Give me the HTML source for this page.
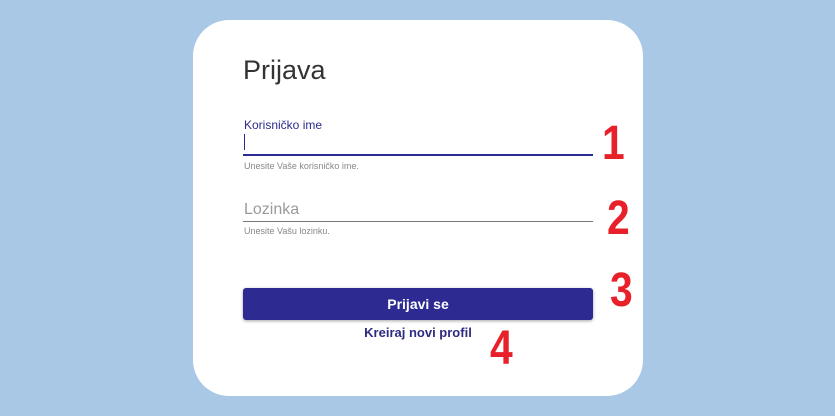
<!DOCTYPE html>
<html><head><style>
body{margin:0;width:835px;height:416px;background:#a8c8e6;position:relative;overflow:hidden;font-family:"Liberation Sans",sans-serif}
.card{position:absolute;left:193px;top:20px;width:450px;height:376px;background:#fff;border-radius:36px}
.a{position:absolute;white-space:nowrap}
.n{position:absolute;color:#e8202a;font-weight:bold;font-size:48px;line-height:1;transform:scaleX(0.85);transform-origin:left top}
</style></head><body>
<div class="card"></div>
<div class="a" style="left:243px;top:55px;font-size:27px;color:#333">Prijava</div>
<div class="a" style="left:244px;top:118px;font-size:12px;color:#2c2a8f">Korisničko ime</div>
<div class="a" style="left:244px;top:134px;width:1px;height:16px;background:#2c2a8f"></div>
<div class="a" style="left:243px;top:154px;width:350px;height:2px;background:#2d2a92"></div>
<div class="a" style="left:244px;top:161px;font-size:9px;color:#888">Unesite Vaše korisničko ime.</div>
<div class="a" style="left:244px;top:201px;font-size:16px;color:#9a9a9a">Lozinka</div>
<div class="a" style="left:243px;top:221px;width:350px;height:1px;background:#777"></div>
<div class="a" style="left:244px;top:226px;font-size:9px;color:#888">Unesite Vašu lozinku.</div>
<div class="a" style="left:243px;top:288px;width:350px;height:32px;background:#2d2a92;border-radius:3px;box-shadow:0 1px 3px rgba(0,0,0,.35);color:#fff;font-weight:bold;font-size:14px;text-align:center;line-height:32px">Prijavi se</div>
<div class="a" style="left:243px;top:325px;width:350px;text-align:center;font-weight:bold;font-size:13px;color:#2d2a80">Kreiraj novi profil</div>
<div class="n" style="left:602px;top:120px">1</div>
<div class="n" style="left:607px;top:195px">2</div>
<div class="n" style="left:610px;top:267px">3</div>
<div class="n" style="left:490px;top:325px">4</div>
</body></html>
